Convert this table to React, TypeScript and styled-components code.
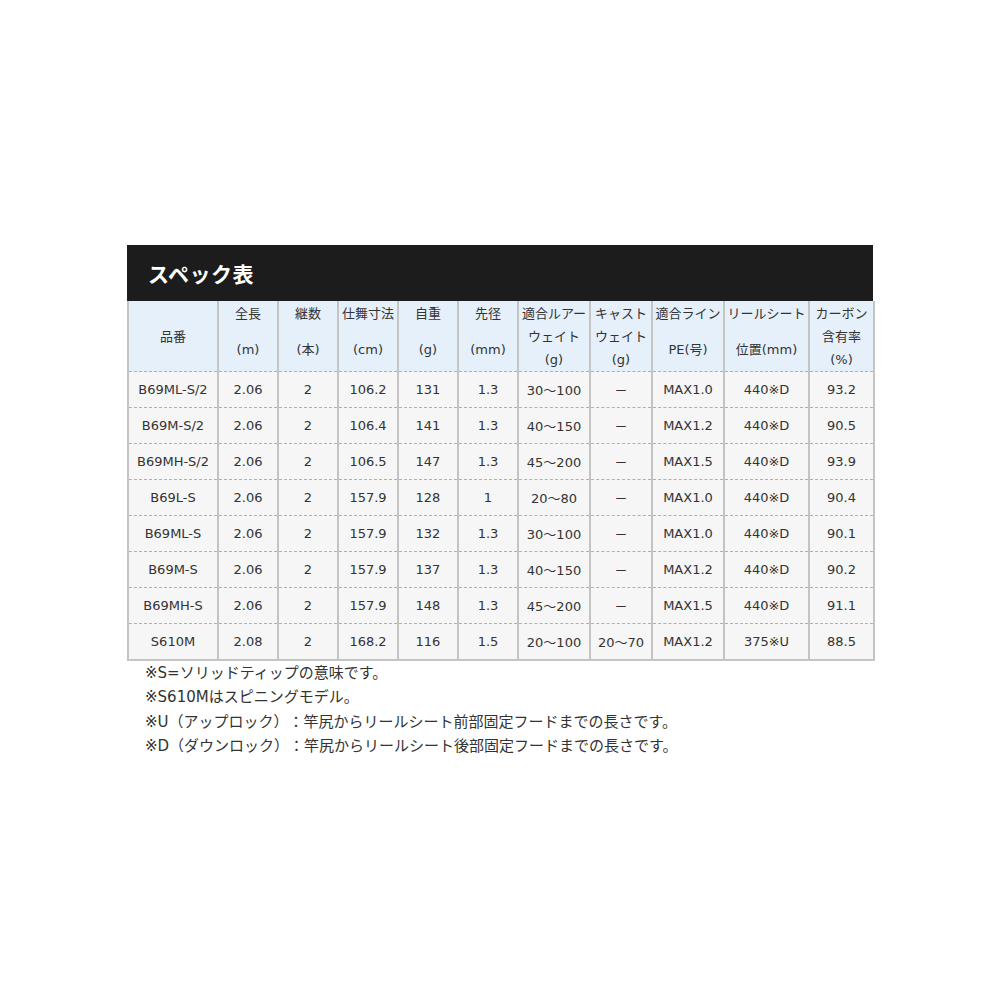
import React from 'react';
import styled, { createGlobalStyle } from 'styled-components';

const GlobalStyle = createGlobalStyle`
  body {
    margin: 0;
    background: #ffffff;
    font-family: 'DejaVu Sans', 'Noto Sans CJK JP', sans-serif;
    color: #333333;
    text-spacing-trim: space-all;
  }
`;

interface HeadCell {
  lines: string[];
  spaced?: boolean;
  middle?: boolean;
}

const headers: HeadCell[] = [
  { lines: ['品番'], middle: true },
  { lines: ['全長', '(m)'], spaced: true },
  { lines: ['継数', '(本)'], spaced: true },
  { lines: ['仕舞寸法', '(cm)'], spaced: true },
  { lines: ['自重', '(g)'], spaced: true },
  { lines: ['先径', '(mm)'], spaced: true },
  { lines: ['適合ルアー', 'ウェイト', '(g)'] },
  { lines: ['キャスト', 'ウェイト', '(g)'] },
  { lines: ['適合ライン', 'PE(号)'], spaced: true },
  { lines: ['リールシート', '位置(mm)'], spaced: true },
  { lines: ['カーボン', '含有率', '(%)'] },
];

const colWidths = [90, 60, 60, 60, 60, 60, 72, 62, 72, 85, 65];

const rows: string[][] = [
  ['B69ML-S/2', '2.06', '2', '106.2', '131', '1.3', '30～100', '－', 'MAX1.0', '440※D', '93.2'],
  ['B69M-S/2', '2.06', '2', '106.4', '141', '1.3', '40～150', '－', 'MAX1.2', '440※D', '90.5'],
  ['B69MH-S/2', '2.06', '2', '106.5', '147', '1.3', '45～200', '－', 'MAX1.5', '440※D', '93.9'],
  ['B69L-S', '2.06', '2', '157.9', '128', '1', '20～80', '－', 'MAX1.0', '440※D', '90.4'],
  ['B69ML-S', '2.06', '2', '157.9', '132', '1.3', '30～100', '－', 'MAX1.0', '440※D', '90.1'],
  ['B69M-S', '2.06', '2', '157.9', '137', '1.3', '40～150', '－', 'MAX1.2', '440※D', '90.2'],
  ['B69MH-S', '2.06', '2', '157.9', '148', '1.3', '45～200', '－', 'MAX1.5', '440※D', '91.1'],
  ['S610M', '2.08', '2', '168.2', '116', '1.5', '20～100', '20～70', 'MAX1.2', '375※U', '88.5'],
];

const notes = [
  '※S=ソリッドティップの意味です。',
  '※S610Mはスピニングモデル。',
  '※U（アップロック）：竿尻からリールシート前部固定フードまでの長さです。',
  '※D（ダウンロック）：竿尻からリールシート後部固定フードまでの長さです。',
];

const Wrap = styled.div`
  width: 746px;
  margin: 245px 0 0 127px;
`;

const TitleBar = styled.div`
  display: flex;
  align-items: center;
  height: 56px;
  padding-left: 21px;
  background: #1c1c1c;
`;

const Title = styled.h2`
  margin: 0;
  font-family: 'Noto Sans CJK JP', sans-serif;
  font-size: 21px;
  font-weight: 700;
  color: #ffffff;
  letter-spacing: 0.5px;
`;

const SpecTable = styled.table`
  width: 746px;
  table-layout: fixed;
  border-collapse: collapse;
  border-bottom: 2px solid #c4c4c4;
  font-size: 13px;
`;

interface ThProps {
  $middle?: boolean;
}

const Th = styled.th<ThProps>`
  height: 70px;
  padding: 1px 0 0;
  box-sizing: border-box;
  background: #e6f0fb;
  border-left: 2px solid #c4c4c4;
  border-right: 2px solid #c4c4c4;
  font-weight: 400;
  text-align: center;
  vertical-align: ${(props) => (props.$middle ? 'middle' : 'top')};
  white-space: nowrap;
`;

interface LineProps {
  $gap: number;
}

const HeadLine = styled.div<LineProps>`
  line-height: 23px;
  margin-top: ${(props) => props.$gap}px;
`;

const Td = styled.td`
  height: 35px;
  padding: 0;
  background: #f6f6f6;
  border-top: 1px dashed #b0b0b0;
  border-left: 2px solid #c4c4c4;
  border-right: 2px solid #c4c4c4;
  text-align: center;
  vertical-align: middle;
  white-space: nowrap;
`;

const Notes = styled.div`
  padding-left: 18px;
  font-size: 15px;
  line-height: 24.3px;
`;

const Note = styled.p`
  margin: 0;
`;

const App = () => {
  return (
    <>
      <GlobalStyle />
      <Wrap>
        <TitleBar>
          <Title>スペック表</Title>
        </TitleBar>
        <SpecTable>
          <colgroup>
            {colWidths.map((w, i) => (
              <col key={i} style={{ width: w }} />
            ))}
          </colgroup>
          <thead>
            <tr>
              {headers.map((h, i) => (
                <Th key={i} $middle={h.middle}>
                  {h.lines.map((line, j) => (
                    <HeadLine key={line} $gap={j > 0 && h.spaced ? 13 : 0}>
                      {line}
                    </HeadLine>
                  ))}
                </Th>
              ))}
            </tr>
          </thead>
          <tbody>
            {rows.map((row) => (
              <tr key={row[0]}>
                {row.map((cell, i) => (
                  <Td key={i}>{cell}</Td>
                ))}
              </tr>
            ))}
          </tbody>
        </SpecTable>
        <Notes>
          {notes.map((n) => (
            <Note key={n}>{n}</Note>
          ))}
        </Notes>
      </Wrap>
    </>
  );
};

export default App;
